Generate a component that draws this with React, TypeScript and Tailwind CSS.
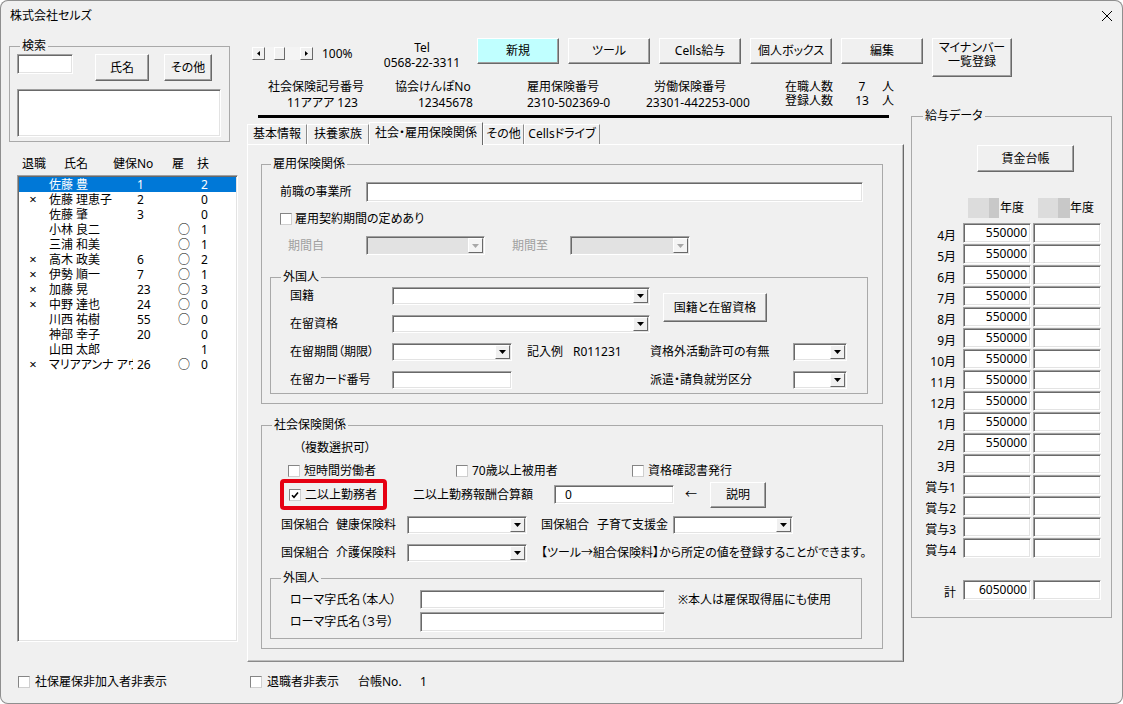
import React from "react"
import { twMerge } from "tailwind-merge"
import { clsx, type ClassValue } from "clsx"

const cn = (...c: ClassValue[]) => twMerge(clsx(c))

type Kids = { className?: string; children?: React.ReactNode }

// sunken 3D field (textbox / listbox)
function Sunken({ className, children }: Kids) {
  return (
    <div
      className={cn(
        "flex items-center bg-white border border-t-[#a0a0a0] border-l-[#a0a0a0] border-r-white border-b-white shadow-[inset_1px_1px_0_#696969,inset_-1px_-1px_0_#e3e3e3] shrink-0",
        className
      )}
    >
      {children}
    </div>
  )
}

function Btn({ className, children }: Kids) {
  return (
    <button
      className={cn(
        "flex items-center justify-center shrink-0 bg-[#f0f0f0] border border-t-white border-l-white border-r-[#696969] border-b-[#696969] shadow-[inset_-1px_-1px_0_#a0a0a0] leading-[14px]",
        className
      )}
    >
      {children}
    </button>
  )
}

function Combo({ className, disabled }: { className?: string; disabled?: boolean }) {
  return (
    <Sunken className={cn("justify-end", disabled && "bg-[#e2e2e2]", className)}>
      <span
        className={cn(
          "w-[15px] h-[calc(100%-2px)] mr-[1px] flex items-center justify-center border border-t-white border-l-white border-r-[#696969] border-b-[#696969]",
          disabled ? "bg-[#f4f4f4]" : "bg-[#f0f0f0]"
        )}
      >
        <svg width="7" height="4" viewBox="0 0 7 4">
          <path d="M0 0h7L3.5 4z" fill={disabled ? "#a8a8a8" : "#000"} />
        </svg>
      </span>
    </Sunken>
  )
}

function Check({ checked }: { checked?: boolean }) {
  return (
    <span className="w-[12px] h-[12px] shrink-0 bg-white border border-t-[#858585] border-l-[#858585] border-r-[#cfcfcf] border-b-[#cfcfcf] flex items-center justify-center">
      {checked && (
        <svg width="8" height="8" viewBox="0 0 8 8">
          <path d="M1 4.2 3 6.3 7 1.6" fill="none" stroke="#000" strokeWidth="1.6" />
        </svg>
      )}
    </span>
  )
}

function Group({
  label,
  className,
  legendClass,
  children,
}: Kids & { label: string; legendClass?: string }) {
  return (
    <fieldset className={cn("border border-[#a9a9a9] shrink-0 min-w-0", className)}>
      <legend className={cn("px-[2px] leading-[14px]", legendClass)}>{label}</legend>
      {children}
    </fieldset>
  )
}

const STAFF = [
  { x: "", name: "佐藤 豊", no: "1", ko: "", fu: "2" },
  { x: "×", name: "佐藤 理恵子", no: "2", ko: "", fu: "0" },
  { x: "", name: "佐藤 肇", no: "3", ko: "", fu: "0" },
  { x: "", name: "小林 良二", no: "", ko: "○", fu: "1" },
  { x: "", name: "三浦 和美", no: "", ko: "○", fu: "1" },
  { x: "×", name: "高木 政美", no: "6", ko: "○", fu: "2" },
  { x: "×", name: "伊勢 順一", no: "7", ko: "○", fu: "1" },
  { x: "×", name: "加藤 晃", no: "23", ko: "○", fu: "3" },
  { x: "×", name: "中野 達也", no: "24", ko: "○", fu: "0" },
  { x: "", name: "川西 祐樹", no: "55", ko: "○", fu: "0" },
  { x: "", name: "神部 幸子", no: "20", ko: "", fu: "0" },
  { x: "", name: "山田 太郎", no: "", ko: "", fu: "1" },
  { x: "×", name: "マリアアンナ アウグスト", no: "26", ko: "○", fu: "0" },
]

const TABS = [
  { label: "基本情報", w: "w-[60px]" },
  { label: "扶養家族", w: "w-[62px]" },
  { label: "社会・雇用保険関係", w: "w-[114px]", active: true },
  { label: "その他", w: "w-[41px]" },
  { label: "Cellsドライブ", w: "w-[76px]" },
]

const PAY = [
  ["4月", "550000"],
  ["5月", "550000"],
  ["6月", "550000"],
  ["7月", "550000"],
  ["8月", "550000"],
  ["9月", "550000"],
  ["10月", "550000"],
  ["11月", "550000"],
  ["12月", "550000"],
  ["1月", "550000"],
  ["2月", "550000"],
  ["3月", ""],
  ["賞与1", ""],
  ["賞与2", ""],
  ["賞与3", ""],
  ["賞与4", ""],
]

function ScrollArrow({ dir }: { dir: "l" | "r" }) {
  return (
    <span className="w-[13px] h-[13px] flex items-center justify-center bg-[#f0f0f0] border border-t-white border-l-white border-r-[#696969] border-b-[#696969]">
      <svg width="3" height="5" viewBox="0 0 3 5">
        <path d={dir === "l" ? "M3 0v5L0 2.5z" : "M0 0v5l3-2.5z"} fill="#000" />
      </svg>
    </span>
  )
}

function PayRow({ label, a, b, className }: { label: string; a: string; b?: string; className?: string }) {
  return (
    <div className={cn("flex h-[20px]", className)}>
      <span className="w-[44px] text-right pt-[6px]">{label}</span>
      <Sunken className="ml-[7px] w-[68px] h-[20px] justify-end pr-[3px]">{a}</Sunken>
      <Sunken className="ml-[2px] w-[68px] h-[20px]">{b}</Sunken>
    </div>
  )
}

export default function App() {
  return (
    <div className="w-[1123px] h-[704px] bg-[#f0f0f0] text-black text-[12px] leading-[14px] font-['Noto_Sans','Noto_Sans_CJK_JP',sans-serif] [font-feature-settings:'palt'] flex flex-col overflow-hidden rounded-[8px] shadow-[inset_0_0_0_1px_#8f8f8f]">
      {/* title bar */}
      <div className="h-[32px] shrink-0 flex items-center justify-between pl-[10px] pr-[10px]">
        <span>株式会社セルズ</span>
        <svg width="12" height="12" viewBox="0 0 12 12">
          <path d="M1 1l10 10M11 1L1 11" stroke="#000" strokeWidth="1" />
        </svg>
      </div>

      <div className="flex flex-1 min-h-0">
        {/* left column */}
        <div className="w-[245px] shrink-0 flex flex-col">
          <Group label="検索" className="ml-[9px] mt-[7px] w-[221px] h-[103px]" legendClass="ml-[10px]">
            <div className="flex items-start mt-[1px] ml-[7px]">
              <Sunken className="w-[56px] h-[20px]" />
              <Btn className="ml-[22px] w-[54px] h-[27px]">氏名</Btn>
              <Btn className="ml-[15px] w-[48px] h-[27px]">その他</Btn>
            </div>
            <Sunken className="ml-[7px] mt-[8px] w-[204px] h-[48px]" />
          </Group>

          <div className="flex mt-[15px] pl-[22px]">
            <span className="w-[42px]">退職</span>
            <span className="w-[49px]">氏名</span>
            <span className="w-[59px]">健保No</span>
            <span className="w-[25px]">雇</span>
            <span>扶</span>
          </div>

          <Sunken className="ml-[17px] mt-[4px] w-[221px] h-[467px] p-[1px] flex-col items-stretch justify-start">
            {STAFF.map((s, i) => (
              <div
                key={s.name}
                className={cn(
                  "flex items-center h-[15px] leading-[15px] shrink-0",
                  i === 0 && "bg-[#0078d7] text-white"
                )}
              >
                <span className="w-[28px] text-center text-[13px]">{s.x}</span>
                <span className="w-[86px] mr-[4px] pl-[2px] overflow-hidden whitespace-nowrap">{s.name}</span>
                <span className="w-[41px]">{s.no}</span>
                <span className="w-[23px]">{s.ko}</span>
                <span>{s.fu}</span>
              </div>
            ))}
          </Sunken>

          <div className="flex items-center h-[14px] mt-[33px] ml-[18px]">
            <Check />
            <span className="ml-[5px]">社保雇保非加入者非表示</span>
          </div>
        </div>

        {/* right area */}
        <div className="flex-1 flex flex-col">
          {/* toolbar */}
          <div className="flex items-start mt-[6px] h-[39px]">
            <div className="flex items-center h-[15px] mt-[8px] ml-[7px]">
              <ScrollArrow dir="l" />
              <span className="w-[35px] h-[13px] bg-[#f4f4f4] flex items-center">
                <span className="ml-[9px] w-[11px] h-[13px] bg-[#f0f0f0] border border-t-white border-l-white border-r-[#696969] border-b-[#696969]" />
              </span>
              <ScrollArrow dir="r" />
              <span className="ml-[9px] w-[60px]">100%</span>
            </div>
            <div className="w-[80px] mt-[2px] leading-[15px] text-center">
              <div>Tel</div>
              <div>0568-22-3311</div>
            </div>
            <div className="flex ml-[15px] gap-[9px]">
              <Btn className="w-[82px] h-[26px] bg-[#c0ffff]">新規</Btn>
              <Btn className="w-[82px] h-[26px]">ツール</Btn>
              <Btn className="w-[82px] h-[26px]">Cells給与</Btn>
              <Btn className="w-[82px] h-[26px]">個人ボックス</Btn>
              <Btn className="w-[82px] h-[26px]">編集</Btn>
              <Btn className="w-[80px] h-[39px] flex-col pb-[6px]">
                <span>マイナンバー</span>
                <span>一覧登録</span>
              </Btn>
            </div>
          </div>

          <div className="flex flex-1 min-h-0">
            {/* middle column */}
            <div className="w-[660px] shrink-0 flex flex-col">
              <div className="flex mt-[2px] ml-[13px] leading-[16px]">
                <div className="w-[130px]">
                  <div className="pl-[10px]">社会保険記号番号</div>
                  <div className="pl-[29px]">11アアア 123</div>
                </div>
                <div className="w-[130px]">
                  <div className="pl-[7px]">協会けんぽNo</div>
                  <div className="pl-[30px]">12345678</div>
                </div>
                <div className="w-[125px]">
                  <div className="pl-[9px]">雇用保険番号</div>
                  <div className="pl-[9px]">2310-502369-0</div>
                </div>
                <div className="w-[130px]">
                  <div className="pl-[11px]">労働保険番号</div>
                  <div className="pl-[3px]">23301-442253-000</div>
                </div>
                <div className="leading-[14px] mt-[1px]">
                  <div className="flex">
                    <span className="pl-[12px] w-[74px]">在職人数</span>
                    <span className="w-[30px] text-center">7</span>
                    <span className="ml-[5px]">人</span>
                  </div>
                  <div className="flex">
                    <span className="pl-[12px] w-[74px]">登録人数</span>
                    <span className="w-[30px] text-center">13</span>
                    <span className="ml-[5px]">人</span>
                  </div>
                </div>
              </div>
              <div className="mt-[4px] ml-[13px] w-[631px] h-[3px] bg-black" />

              {/* tabs */}
              <div className="flex items-end h-[22px] mt-[4px] ml-[2px]">
                {TABS.map((t) =>
                  t.active ? (
                    <div
                      key={t.label}
                      className={cn(
                        "relative z-10 h-[23px] -mb-px bg-[#f0f0f0] text-center leading-[20px] border-t border-l border-r border-t-white border-l-white border-r-[#696969]",
                        t.w
                      )}
                    >
                      {t.label}
                    </div>
                  ) : (
                    <div
                      key={t.label}
                      className={cn(
                        "h-[20px] text-center leading-[18px] border-t border-l border-r border-t-white border-l-white border-r-[#8a8a8a]",
                        t.w
                      )}
                    >
                      {t.label}
                    </div>
                  )
                )}
              </div>

              {/* tab page */}
              <div className="ml-[2px] w-[657px] h-[518px] border border-t-white border-l-white border-r-[#696969] border-b-[#8a8a8a] shadow-[inset_-1px_-1px_0_#c0c0c0]">
                <Group label="雇用保険関係" className="ml-[13px] mt-[12px] w-[622px] h-[247px]" legendClass="ml-[9px]">
                  <div className="flex items-center mt-[11px] h-[20px] pl-[18px]">
                    <span className="w-[86px]">前職の事業所</span>
                    <Sunken className="w-[497px] h-[20px]" />
                  </div>
                  <div className="flex items-center mt-[10px] h-[14px] pl-[18px]">
                    <Check />
                    <span className="ml-[3px]">雇用契約期間の定めあり</span>
                  </div>
                  <div className="flex items-center mt-[10px] h-[19px] pl-[26px] text-[#a0a0a0]">
                    <span className="w-[78px]">期間自</span>
                    <Combo disabled className="w-[119px] h-[19px]" />
                    <span className="ml-[27px] w-[58px]">期間至</span>
                    <Combo disabled className="w-[120px] h-[19px]" />
                  </div>

                  <Group label="外国人" className="ml-[8px] mt-[15px] w-[598px] h-[124px]" legendClass="ml-[10px]">
                    <div className="flex items-start pl-[19px]">
                      <div>
                        <div className="flex items-center mt-[3px] h-[18px]">
                          <span className="w-[102px]">国籍</span>
                          <Combo className="w-[258px] h-[18px]" />
                        </div>
                        <div className="flex items-center mt-[10px] h-[18px]">
                          <span className="w-[102px]">在留資格</span>
                          <Combo className="w-[258px] h-[18px]" />
                        </div>
                      </div>
                      <Btn className="ml-[13px] mt-[9px] w-[104px] h-[29px]">国籍と在留資格</Btn>
                    </div>
                    <div className="flex items-center mt-[10px] h-[18px] pl-[19px]">
                      <span className="w-[102px]">在留期間（期限）</span>
                      <Combo className="w-[120px] h-[18px]" />
                      <span className="w-[138px] pl-[15px]">
                        記入例<span className="ml-[10px]">R011231</span>
                      </span>
                      <span className="w-[143px]">資格外活動許可の有無</span>
                      <Combo className="w-[54px] h-[18px]" />
                    </div>
                    <div className="flex items-center mt-[10px] h-[18px] pl-[19px]">
                      <span className="w-[102px]">在留カード番号</span>
                      <Sunken className="w-[120px] h-[18px]" />
                      <span className="w-[138px]" />
                      <span className="w-[143px]">派遣・請負就労区分</span>
                      <Combo className="w-[54px] h-[18px]" />
                    </div>
                  </Group>
                </Group>

                <Group label="社会保険関係" className="ml-[13px] mt-[14px] w-[622px] h-[231px]" legendClass="ml-[10px]">
                  <div className="mt-[9px] h-[14px] pl-[37px]">（複数選択可）</div>
                  <div className="flex items-center mt-[9px] h-[14px] pl-[26px]">
                    <div className="flex items-center w-[168px]">
                      <Check />
                      <span className="ml-[4px]">短時間労働者</span>
                    </div>
                    <div className="flex items-center w-[176px]">
                      <Check />
                      <span className="ml-[4px]">70歳以上被用者</span>
                    </div>
                    <div className="flex items-center">
                      <Check />
                      <span className="ml-[4px]">資格確認書発行</span>
                    </div>
                  </div>
                  <div className="flex items-center mt-[1px] h-[31px]">
                    <div className="ml-[18px] w-[107px] h-[31px] border-[4px] border-[#e60012] rounded-[4px] flex items-center pl-[5px]">
                      <Check checked />
                      <span className="ml-[4px]">二以上勤務者</span>
                    </div>
                    <span className="ml-[26px] w-[141px]">二以上勤務報酬合算額</span>
                    <Sunken className="w-[120px] h-[19px] pl-[10px]">0</Sunken>
                    <span className="ml-[11px]">←</span>
                    <Btn className="ml-[13px] w-[56px] h-[26px]">説明</Btn>
                  </div>
                  <div className="flex items-center mt-[6px] h-[18px] pl-[19px]">
                    <span className="w-[126px]">
                      国保組合<span className="ml-[7px]">健康保険料</span>
                    </span>
                    <Combo className="w-[120px] h-[18px]" />
                    <span className="ml-[14px] w-[132px]">
                      国保組合<span className="ml-[8px]">子育て支援金</span>
                    </span>
                    <Combo className="w-[120px] h-[18px]" />
                  </div>
                  <div className="flex items-center mt-[10px] h-[18px] pl-[19px]">
                    <span className="w-[126px]">
                      国保組合<span className="ml-[7px]">介護保険料</span>
                    </span>
                    <Combo className="w-[120px] h-[18px]" />
                    <span className="ml-[14px]">【ツール→組合保険料】から所定の値を登録することができます。</span>
                  </div>

                  <Group label="外国人" className="ml-[8px] mt-[9px] w-[592px] h-[68px]" legendClass="ml-[10px]">
                    <div className="flex items-center mt-[5px] h-[19px] pl-[19px]">
                      <span className="w-[130px]">ローマ字氏名（本人）</span>
                      <Sunken className="w-[245px] h-[19px]" />
                      <span className="ml-[13px]">※本人は雇保取得届にも使用</span>
                    </div>
                    <div className="flex items-center mt-[3px] h-[19px] pl-[19px]">
                      <span className="w-[130px]">ローマ字氏名（３号）</span>
                      <Sunken className="w-[245px] h-[20px]" />
                    </div>
                  </Group>
                </Group>
              </div>

              <div className="flex items-center h-[14px] mt-[13px] ml-[5px]">
                <Check />
                <span className="ml-[5px] w-[72px]">退職者非表示</span>
                <span className="ml-[19px] w-[62px]">台帳No.</span>
                <span>1</span>
              </div>
            </div>

            {/* salary column */}
            <div className="flex-1">
              <Group label="給与データ" className="ml-[6px] mt-[32px] w-[201px] h-[509px]" legendClass="ml-[11px]">
                <Btn className="ml-[65px] mt-[22px] w-[97px] h-[27px]">賃金台帳</Btn>
                <div className="flex items-center mt-[26px] h-[20px] ml-[56px]">
                  <span className="w-[21px] h-[20px] bg-[#dcdcdc]" />
                  <span className="w-[10px] h-[20px] bg-[#c8c8c8]" />
                  <span className="ml-[1px] w-[24px]">年度</span>
                  <span className="ml-[14px] w-[20px] h-[20px] bg-[#dcdcdc]" />
                  <span className="w-[12px] h-[20px] bg-[#c8c8c8]" />
                  <span>年度</span>
                </div>
                <div className="mt-[5px] flex flex-col gap-[1px]">
                  {PAY.map(([m, v]) => (
                    <PayRow key={m} label={m} a={v} />
                  ))}
                </div>
                <PayRow label="計" a="6050000" className="mt-[22px]" />
              </Group>
            </div>
          </div>
        </div>
      </div>
    </div>
  )
}
